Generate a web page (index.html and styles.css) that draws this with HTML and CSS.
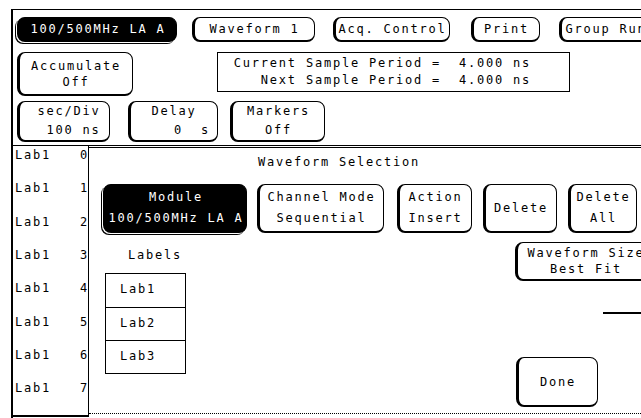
FILE: index.html
```html
<!DOCTYPE html>
<html>
<head>
<meta charset="utf-8">
<link rel="stylesheet" href="styles.css">
</head>
<body>
<div class="screen">
  <div class="row row1">
    <div class="btn inv b-mod">100/500MHz LA A</div>
    <div class="btn b-wave">Waveform 1</div>
    <div class="btn b-acq">Acq. Control</div>
    <div class="btn b-print">Print</div>
    <div class="btn b-group">Group Run</div>
  </div>
  <div class="row row2">
    <div class="btn b-accum"><span>Accumulate</span><span>Off</span></div>
    <div class="period">
      <div>Current Sample Period =  4.000 ns</div>
      <div>Next Sample Period =  4.000 ns</div>
    </div>
  </div>
  <div class="row row3">
    <div class="btn b-sec"><span> sec/Div</span><span>  100 ns</span></div>
    <div class="btn b-delay"><span>Delay</span><span>    0  s</span></div>
    <div class="btn b-mark"><span>Markers</span><span>Off</span></div>
  </div>
  <div class="main">
    <div class="labels-col">
      <div class="lrow"><span>Lab1</span><span>0</span></div>
      <div class="lrow"><span>Lab1</span><span>1</span></div>
      <div class="lrow"><span>Lab1</span><span>2</span></div>
      <div class="lrow"><span>Lab1</span><span>3</span></div>
      <div class="lrow"><span>Lab1</span><span>4</span></div>
      <div class="lrow"><span>Lab1</span><span>5</span></div>
      <div class="lrow"><span>Lab1</span><span>6</span></div>
      <div class="lrow"><span>Lab1</span><span>7</span></div>
    </div>
    <div class="dialog">
      <div class="title">Waveform Selection</div>
      <div class="drow">
        <div class="btn inv d-module"><span>Module</span><span>100/500MHz LA A</span></div>
        <div class="btn d-chan"><span>Channel Mode</span><span>Sequential</span></div>
        <div class="btn d-action"><span>Action</span><span>Insert</span></div>
        <div class="btn d-delete"><span>Delete</span></div>
        <div class="btn d-delall"><span>Delete</span><span>All</span></div>
      </div>
      <div class="lower">
        <div class="lab-col">
          <div class="lab-head">Labels</div>
          <div class="lab-box">
            <div class="lab-item">Lab1</div>
            <div class="lab-item">Lab2</div>
            <div class="lab-item">Lab3</div>
          </div>
        </div>
        <div class="side-col">
          <div class="btn d-size"><span>Waveform Size</span><span>Best Fit</span></div>
          <div class="rule"></div>
          <div class="btn d-done"><span>Done</span></div>
        </div>
      </div>
    </div>
  </div>
</div>
</body>
</html>
```

FILE: styles.css
```css
* { box-sizing: border-box; }
html, body { margin: 0; padding: 0; background: #fff; }
body {
  width: 641px;
  height: 418px;
  overflow: hidden;
  font-family: "DejaVu Sans Mono", "Liberation Mono", monospace;
  font-size: 12px;
  letter-spacing: 1.78px;
  color: #000;
}
.screen {
  margin: 9px 0 0 11px;
  width: 660px;
  height: 409px;
  border-top: 1px solid #000;
  border-left: 2px solid #000;
}
.row { display: flex; align-items: flex-start; padding-left: 4px; }
.btn {
  flex: none;
  display: flex;
  flex-direction: column;
  justify-content: center;
  align-items: center;
  white-space: pre;
  border: 1px solid #000;
  border-left-width: 3px;
  border-bottom-width: 2px;
  border-radius: 8px;
  background: #fff;
  line-height: 16px;
}
.btn.inv {
  background: #000;
  color: #fff;
  box-shadow: -1px 1px 0 0 #fff, -2px 2px 0 0 #000;
}

.row1 { margin-top: 7px; height: 25px; }
.row1 .btn { height: 25px; }
.b-mod { width: 160px; }
.b-wave { width: 123px; margin-left: 15px; }
.b-acq { width: 117px; margin-left: 18px; }
.b-print { width: 69px; margin-left: 21px; }
.b-group { width: 92px; margin-left: 19px; }

.row2 { margin-top: 10px; height: 44px; }
.b-accum { width: 116px; height: 44px; }
.period {
  margin-left: 84px;
  width: 353px;
  height: 40px;
  border: 1px solid #000;
  padding-right: 38px;
  text-align: right;
  white-space: pre;
  display: flex;
  flex-direction: column;
  justify-content: center;
  line-height: 17px;
}

.row3 { margin-top: 5px; height: 41px; }
.row3 .btn { height: 41px; line-height: 19px; }
.b-sec { width: 93px; }
.b-delay { width: 90px; margin-left: 18px; }
.b-mark { width: 95px; margin-left: 12px; }

.main { display: flex; align-items: flex-start; margin-top: 3px; }
.labels-col {
  flex: none;
  width: 76px;
  height: 272px;
  border-top: 1px solid #000;
  border-right: 1px solid #000;
  border-bottom: 2px solid #000;
  padding-top: 1px;
  display: grid;
  grid-auto-rows: 33.33px;
  align-content: start;
}
.lrow {
  display: flex;
  justify-content: space-between;
  line-height: 16px;
  padding: 0 0 0 2px;
}
.lrow span:last-child { margin-right: -1px; }

.dialog {
  flex: none;
  width: 570px;
  height: 269px;
  border-top: 3px double #000;
  border-bottom: 1px dotted #000;
}
.title { margin-top: 6px; padding-left: 169px; line-height: 16px; white-space: pre; }
.drow { display: flex; margin-top: 14px; padding-left: 14px; }
.drow .btn { height: 49px; line-height: 21px; }
.d-module { width: 144px; }
.d-chan { width: 127px; margin-left: 10px; }
.d-action { width: 75px; margin-left: 13px; }
.d-delete { width: 74px; margin-left: 11px; }
.d-delall { width: 69px; margin-left: 11px; }

.lower { display: flex; align-items: flex-start; }
.lab-col { margin-left: 16px; width: 81px; }
.lab-head { margin-top: 14px; padding-left: 23px; line-height: 16px; }
.lab-box { margin-top: 10px; border: 1px solid #000; }
.lab-item {
  height: 33px;
  line-height: 31px;
  padding-left: 14px;
  border-top: 1px solid #000;
}
.lab-item:first-child { border-top: none; height: 33px; }

.side-col { margin-left: 329px; display: flex; flex-direction: column; align-items: flex-start; }
.d-size { margin-top: 9px; width: 140px; height: 39px; }
.rule { margin-top: 31px; margin-left: 88px; width: 40px; border-top: 2px solid #000; }
.d-done { margin-top: 43px; margin-left: 1px; width: 82px; height: 50px; }
```
